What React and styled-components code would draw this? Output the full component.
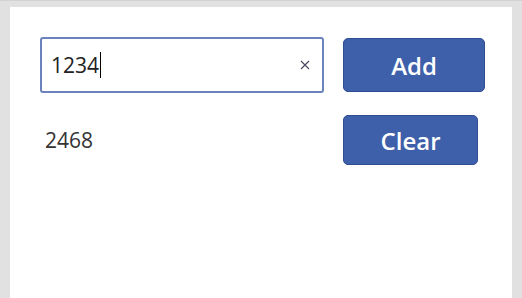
import React from "react";
import styled, { createGlobalStyle } from "styled-components";

const Global = createGlobalStyle`
  html, body {
    margin: 0;
    padding: 0;
    background: #e1e1e1;
  }
  body {
    border-top: 1px solid #d3d3d3;
    font-family: "Open Sans", "Noto Sans", "Liberation Sans", sans-serif;
  }
`;

const Panel = styled.div`
  margin: 6px 10px 0;
  height: 291px;
  background: #fff;
  padding: 30px 0 0 30px;
  box-sizing: border-box;
`;

const Row = styled.div`
  display: flex;
  align-items: center;
  gap: 19px;
  margin-bottom: ${(p) => p.$gap || 0}px;
`;

const Field = styled.div`
  width: 284px;
  height: 56px;
  box-sizing: border-box;
  border: 2px solid #6a83bd;
  border-radius: 3px;
  display: flex;
  align-items: center;
  padding: 0 12px 0 9px;
`;

const FieldText = styled.span`
  font-size: 21px;
  color: #222;
`;

const Caret = styled.span`
  display: inline-block;
  width: 1px;
  height: 26px;
  background: #000;
  margin-left: 1px;
`;

const ClearX = styled.svg`
  margin-left: auto;
  width: 10px;
  height: 10px;
`;

const Output = styled.div`
  width: 284px;
  box-sizing: border-box;
  padding-left: 5px;
  font-size: 21px;
  color: #333;
`;

const Button = styled.button`
  width: ${(p) => p.$w}px;
  height: ${(p) => p.$h}px;
  box-sizing: border-box;
  background: #3e5fa9;
  border: 1px solid #2f4d92;
  border-radius: 5px;
  color: #fff;
  font-family: inherit;
  font-size: 24px;
  font-weight: 600;
  padding: 1px 0 0;
  cursor: pointer;
`;

export default function App() {
  return (
    <>
      <Global />
      <Panel>
        <Row $gap={22}>
          <Field>
            <FieldText>1234</FieldText>
            <Caret />
            <ClearX viewBox="0 0 10 10">
              <path d="M1 1 L9 9 M9 1 L1 9" stroke="#4a4560" strokeWidth="1.1" fill="none" />
            </ClearX>
          </Field>
          <Button $w={142} $h={54}>Add</Button>
        </Row>
        <Row>
          <Output>2468</Output>
          <Button $w={135} $h={50}>Clear</Button>
        </Row>
      </Panel>
    </>
  );
}
